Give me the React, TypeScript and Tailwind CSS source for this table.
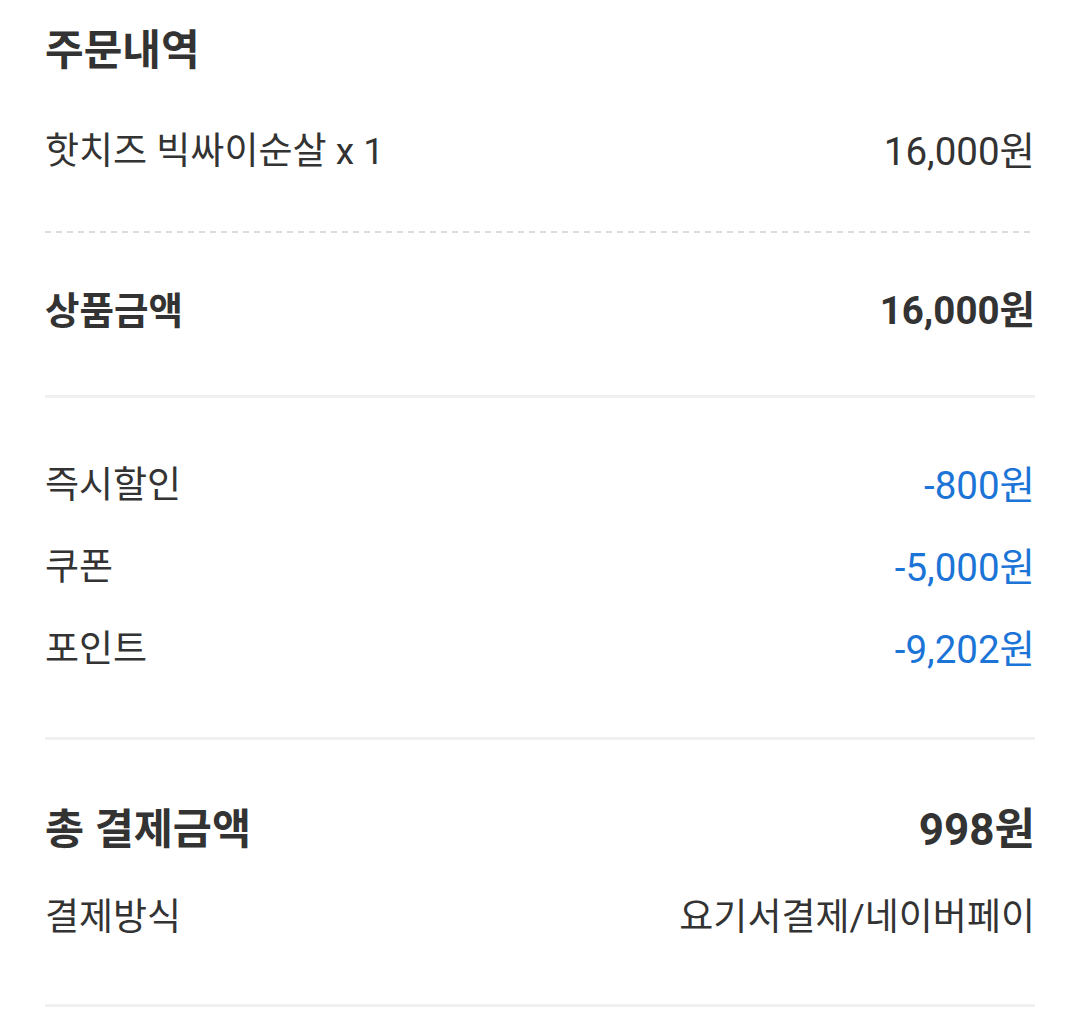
import React from 'react';

type Line = { label: string; value: string };

const discounts: Line[] = [
  { label: '즉시할인', value: '-800원' },
  { label: '쿠폰', value: '-5,000원' },
  { label: '포인트', value: '-9,202원' },
];

const Divider = () => <div className="h-[3px] bg-[#f0f0f0]" />;

const Row = ({ label, value, className = '', valueClass = '' }: any) => (
  <div className={`flex items-center justify-between ${className}`}>
    <span>{label}</span>
    <span className={valueClass}>{value}</span>
  </div>
);

export default function App() {
  return (
    <div
      className="min-h-screen bg-white px-[45px] text-[#333333]"
      style={{ fontFamily: 'Roboto, "Noto Sans CJK KR", sans-serif' }}
    >
      {/* 주문내역 */}
      <div className="flex h-[100px] items-center text-[42px] font-bold">주문내역</div>
      <Row
        label="핫치즈 빅싸이순살 x 1"
        value="16,000원"
        className="h-[104px] text-[37px]"
        valueClass="text-[38.5px]"
      />
      <div className="mt-[27px] h-[2px] bg-[linear-gradient(to_right,#dcdcdc_6px,transparent_6px)] bg-[length:11px_2px]" />

      {/* 상품금액 */}
      <Row
        label="상품금액"
        value="16,000원"
        className="h-[156px] text-[37.5px] font-bold"
        valueClass="text-[38.5px]"
      />
      <div className="mt-[6px]">
        <Divider />
      </div>

      {/* 할인 */}
      <div className="pt-[47px] pb-[46px]">
        {discounts.map((d) => (
          <Row
            key={d.label}
            label={d.label}
            value={d.value}
            className="h-[82px] text-[37px]"
            valueClass="text-[38.5px] text-[#1b74d6]"
          />
        ))}
      </div>
      <Divider />

      {/* 총 결제금액 */}
      <div className="pt-[50px] pb-[46px]">
        <Row
          label="총 결제금액"
          value="998원"
          className="h-[80px] text-[42.5px] font-bold"
          valueClass="text-[44px]"
        />
        <Row
          label="결제방식"
          value="요기서결제/네이버페이"
          className="mt-[8px] h-[80px] text-[37px]"
        />
      </div>
      <Divider />
    </div>
  );
}
